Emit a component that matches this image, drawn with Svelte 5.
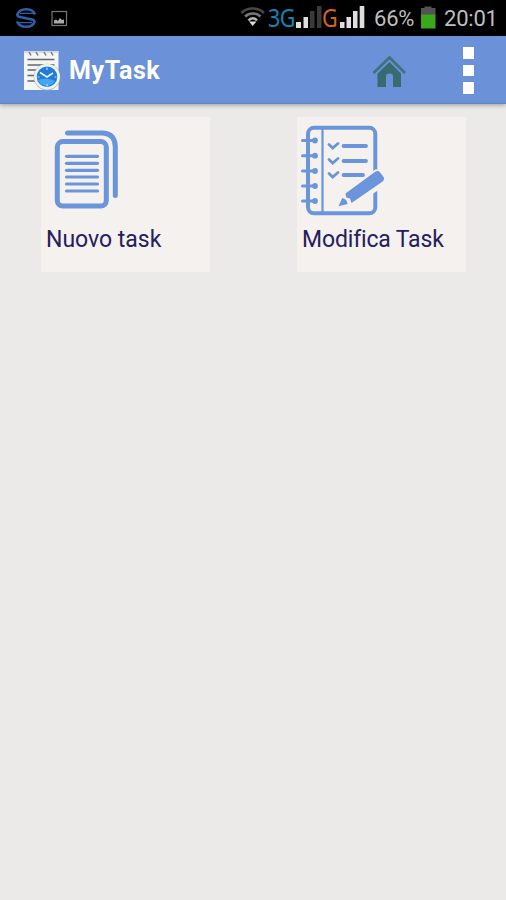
<script>
  const rings = [140.5, 155.7, 171, 186, 201];
  const lines = [156.3, 163.3, 170.3, 177, 184, 191];
  const checks = [
    { y: 145.5, end: 366 },
    { y: 160.5, end: 366 },
    { y: 174.5, end: 363 }
  ];
</script>

<main class="screen">
  <div class="status">
    <svg class="swirl" viewBox="15 7 22 22" width="22" height="22" fill="none" stroke="#2c60a8" stroke-width="2.500">
      <path d="M35 14.500C32.500 7.500 20 7.500 17.300 14.500Q17.300 16.500 20 17L32 19.500Q35 20.300 34.500 22C32 28.500 20 28.500 17 21.500" />
      <path d="M20 13.300H35M17 22.700H32" stroke-width="1.300" />
    </svg>
    <svg class="photo" viewBox="51 10 17 17" width="17" height="17">
      <rect x="52" y="11.500" width="14.500" height="14" fill="none" stroke="#777" stroke-width="1.200" />
      <path d="M54 23.500v-3l2-1 2 1.500 2-3 2 2 2-.5v4z" fill="#aaa" />
    </svg>
    <svg class="wifi" viewBox="240 6 26 22" width="26" height="22" fill="none" stroke-width="2.600">
      <path d="M241.500 13C247 7 258.500 7 264 13" stroke="#484848" />
      <path d="M245 16.500C249 12.500 256.500 12.500 260.500 16.500" stroke="#777" />
      <path d="M248.500 20.500C251 17.500 254.500 17.500 257 20.500" stroke="#b5b5b5" />
      <path d="M249 21.500L252.700 26L256.500 21.500Z" fill="#ddd" />
    </svg>
    <span class="net three">3G</span>
    <svg class="bars" viewBox="296 4 26 25" width="26" height="25">
      <path d="M296 22h5v6h-5zM303.500 17h4.500v11h-4.500z" fill="#dedede" />
      <path d="M310 11h4.500v17h-4.500zM317 6h4.500v22h-4.500z" fill="#3a3a3a" />
    </svg>
    <span class="net gee">G</span>
    <svg class="bars" viewBox="340 4 26 25" width="26" height="25">
      <path d="M340 22h4.500v6h-4.500zM346.500 17h4.500v11h-4.500zM353 11h4.500v17h-4.500zM359.700 6h4.600v22h-4.600z" fill="#dedede" />
    </svg>
    <span class="pct">66%</span>
    <svg class="battery" viewBox="420 6 16 23" width="16" height="23">
      <path d="M421 8h3.500V6.500h7V8h4v7H421z" fill="#535353" />
      <path d="M421 14.500h14.500v14H421z" fill="#39a81c" />
    </svg>
    <span class="time">20:01</span>
  </div>

  <header>
    <svg class="logo" viewBox="22 48 40 44" width="40" height="44">
      <path d="M24 51h34.500v39H24z" fill="#f5f5f3" />
      <path d="M24 51h34.500v2H24z" fill="#d5dbe6" />
      <path d="M29 52l2 3.500M36 52l2 3.500M44 52l2 3.500M51 52l2 3.500" stroke="#747b86" stroke-width="1.500" />
      <path d="M27.500 59.500h27M27.500 65h27M27.500 70h12M27.500 75.500h8M27.500 81h8" stroke="#62676d" stroke-width="1.500" />
      <circle cx="47" cy="77" r="13.300" fill="#a9b8cb" />
      <circle cx="47" cy="76.800" r="12.800" fill="#f1f4f6" />
      <circle cx="47" cy="76.800" r="10.300" fill="#1f7cdb" />
      <path d="M38 80a9.500 9.500 0 0 0 17 1q-8-4-17-1z" fill="#45a5f0" />
      <path d="M40 72.500l7 4.500 6-4" fill="none" stroke="#e8f5ff" stroke-width="1.600" />
      <path d="M47 67.500v2.500M47 84v2.500M37.500 77h2M54.500 77h2" stroke="#b8dcff" stroke-width="1.200" />
    </svg>
    <h1>MyTask</h1>
    <svg class="home" viewBox="372 54 34 34" width="34" height="34">
      <path d="M373.500 73L389.500 57.500L405 73" fill="none" stroke="#3d7280" stroke-width="2.700" />
      <path d="M377.500 73.500L389.500 62L401 73.500V87H393V76Q393 73.500 389.500 73.500Q386 73.500 386 76V87H377.500z" fill="#376b70" />
    </svg>
    <div class="menu"><i></i><i></i><i></i></div>
  </header>

  <div class="grid">
    <button class="card">
      <svg viewBox="41 117 90 106" width="90" height="106" fill="none" stroke="#6b95da" stroke-linecap="round">
        <rect x="57.300" y="141.600" width="49" height="64.500" rx="5.500" stroke-width="5" />
        <path d="M67.500 133H103Q115.300 134 115.300 147V195.500" stroke-width="5" />
        {#each lines as y}
          <path d={`M66.500 ${y}H97.500`} stroke-width="3.200" />
        {/each}
      </svg>
      <span>Nuovo task</span>
    </button>
    <button class="card edit">
      <svg viewBox="297 117 90 106" width="90" height="106" fill="none" stroke="#6b95da" stroke-linecap="round">
        <rect x="308" y="127.800" width="67.300" height="85.500" rx="6" stroke-width="4" />
        <path d="M322.500 129V212" stroke-width="2.200" stroke-linecap="butt" />
        {#each rings as y}
          <path d={`M302.500 ${y}H315`} stroke-width="3" />
          <circle cx="315" cy={y} r="2.900" fill="#6b95da" stroke="none" />
        {/each}
        {#each checks as c}
          <path d={`M329 ${c.y - 1}L332.700 ${c.y + 2.500}L338 ${c.y - 2}`} stroke-width="2.800" />
          <path d={`M343.500 ${c.y + 0.500}H${c.end}`} stroke-width="3.800" />
        {/each}
        <path d="M336 208L341 195L376 169L388 177L385 186L352 207z" fill="#f4f1ee" stroke="none" />
        <path d="M345.500 193.500L375.500 171.500Q378 170 380 172.300L383.700 177.300Q385 179.500 383 181.300L351.500 203L350 198.500L346.300 197.500z" fill="#6b95da" stroke="none" />
        <path d="M338.500 206.200L342.300 198Q347 199 347.500 204z" fill="#6b95da" stroke="none" />
      </svg>
      <span>Modifica Task</span>
    </button>
  </div>
</main>

<style>
  .screen {
    width: 506px;
    height: 900px;
    overflow: hidden;
    background: #ebeae8;
    font-family: Roboto, "Liberation Sans", sans-serif;
  }
  .status {
    display: flex;
    align-items: flex-start;
    box-sizing: border-box;
    height: 36px;
    background: #000;
    color: #bebebe;
    white-space: nowrap;
  }
  svg { display: block; flex: none; }
  .swirl { margin: 7px 0 0 15px; }
  .photo { margin: 10px 0 0 14px; }
  .wifi { margin: 6px 0 0 172px; }
  .net {
    flex: none;
    font-family: "Noto Sans", sans-serif;
    font-size: 25px;
    line-height: 34px;
    transform: scaleX(0.86);
    transform-origin: left;
  }
  .three { width: 28px; margin-left: 2px; color: #0e84b4; letter-spacing: -0.5px; }
  .bars { margin-top: 4px; }
  .gee { width: 18px; color: #db6418; }
  .pct, .time { flex: none; font-size: 22px; line-height: 38px; }
  .pct { width: 46px; margin-left: 8px; letter-spacing: -0.2px; }
  .battery { margin-top: 6px; }
  .time { margin-left: 8px; letter-spacing: -0.2px; }
  header {
    display: flex;
    align-items: flex-start;
    box-sizing: border-box;
    height: 68px;
    background: #6b91d8;
    border-bottom: 1px solid #6388ca;
    box-shadow: 0 1px 5px rgba(0, 0, 0, 0.35);
  }
  .logo { margin: 12px 0 0 22px; }
  h1 {
    width: 303px;
    margin: 0 0 0 7px;
    color: #fff;
    font-size: 25px;
    font-weight: 700;
    line-height: 69px;
    letter-spacing: 0.6px;
  }
  .home { margin-top: 18px; }
  .menu {
    display: flex;
    flex-direction: column;
    gap: 6px;
    margin: 11px 0 0 57px;
  }
  .menu i { width: 11px; height: 11.500px; background: #fff; }
  .grid {
    display: flex;
    gap: 87px;
    padding: 13px 0 0 41px;
  }
  .card {
    display: flex;
    flex-direction: column;
    align-items: flex-start;
    width: 169px;
    height: 155px;
    padding: 0;
    border: 0;
    background: #f4f1ee;
    color: #24205f;
    font: 23px/34px Roboto, "Liberation Sans", sans-serif;
  }
  .card span { margin-left: 5px; white-space: nowrap; }
  .edit span { letter-spacing: -0.15px; }
</style>
